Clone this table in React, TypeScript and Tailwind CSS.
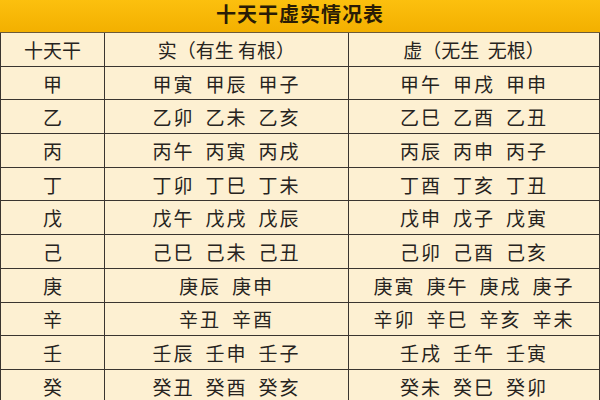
const rows: [string, string[], string[]][] = [
  ["甲", ["甲寅", "甲辰", "甲子"], ["甲午", "甲戌", "甲申"]],
  ["乙", ["乙卯", "乙未", "乙亥"], ["乙巳", "乙酉", "乙丑"]],
  ["丙", ["丙午", "丙寅", "丙戌"], ["丙辰", "丙申", "丙子"]],
  ["丁", ["丁卯", "丁巳", "丁未"], ["丁酉", "丁亥", "丁丑"]],
  ["戊", ["戊午", "戊戌", "戊辰"], ["戊申", "戊子", "戊寅"]],
  ["己", ["己巳", "己未", "己丑"], ["己卯", "己酉", "己亥"]],
  ["庚", ["庚辰", "庚申"], ["庚寅", "庚午", "庚戌", "庚子"]],
  ["辛", ["辛丑", "辛酉"], ["辛卯", "辛巳", "辛亥", "辛未"]],
  ["壬", ["壬辰", "壬申", "壬子"], ["壬戌", "壬午", "壬寅"]],
  ["癸", ["癸丑", "癸酉", "癸亥"], ["癸未", "癸巳", "癸卯"]],
];

function Pairs({ items }: { items: string[] }) {
  return (
    <div className="flex justify-center gap-[11px]">
      {items.map((p) => (
        <span key={p} className="tracking-[2px]">
          {p}
        </span>
      ))}
    </div>
  );
}

export default function App() {
  return (
    <div
      className="w-[600px] h-[400px] overflow-hidden bg-[#fdf0d2] text-[#262320]"
      style={{ fontFamily: '"Noto Sans CJK SC", "Noto Sans", sans-serif' }}
    >
      {/* title bar */}
      <div className="h-[33px] flex items-center justify-center bg-gradient-to-b from-[#fcc00e] to-[#f3b000] border-b-[1.5px] border-[#6b5a3a]">
        <h1 className="text-[20px] font-bold tracking-[1px] text-[#2a1c05] leading-none pb-[4px]">
          十天干虚实情况表
        </h1>
      </div>

      <div className="grid grid-cols-[105px_244px_1fr] text-[19px] leading-none">
        <div className="h-[33.7px] flex items-center justify-center border-l-[1.5px] border-r-[1.5px] border-b-[1.5px] border-[#3a3530]">
          十天干
        </div>
        <div className="h-[33.7px] flex items-center justify-center border-r-[1.5px] border-b-[1.5px] border-[#3a3530]">
          实（有生 有根）
        </div>
        <div className="h-[33.7px] flex items-center justify-center border-r-[1.5px] border-b-[1.5px] border-[#3a3530]">
          虚（无生&nbsp;&nbsp;无根）
        </div>

        {rows.map(([stem, real, empty]) => (
          <div key={stem} className="contents">
            <div className="h-[33.7px] flex items-center justify-center border-l-[1.5px] border-r-[1.5px] border-b-[1.5px] border-[#3a3530]">
              {stem}
            </div>
            <div className="h-[33.7px] flex items-center justify-center border-r-[1.5px] border-b-[1.5px] border-[#3a3530]">
              <Pairs items={real} />
            </div>
            <div className="h-[33.7px] flex items-center justify-center border-r-[1.5px] border-b-[1.5px] border-[#3a3530]">
              <Pairs items={empty} />
            </div>
          </div>
        ))}
      </div>
    </div>
  );
}
